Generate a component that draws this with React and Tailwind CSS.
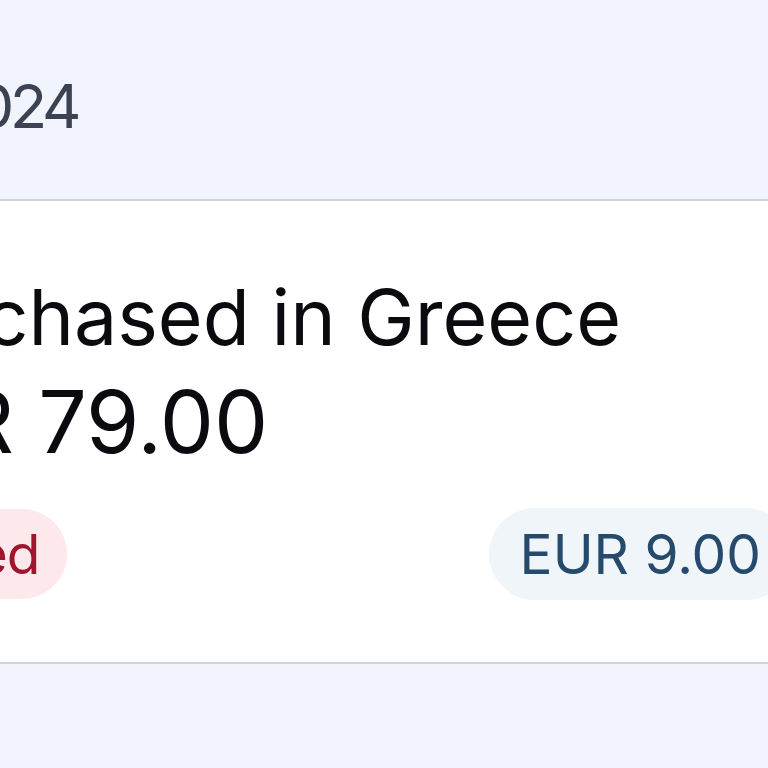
import React from 'react';

const App = () => {
  return (
    <div className="w-[768px] h-[768px] overflow-hidden bg-[#f1f4fc] font-['Inter','Noto_Sans',sans-serif]">
      <div className="h-[199px] pt-[76px] overflow-hidden">
        <p className="ml-[-236px] whitespace-nowrap text-[61px] tracking-[-0.07em] leading-none text-[#3b4252]">12 Mar 2024</p>
      </div>
      <div className="h-[465px] bg-white border-y-2 border-[#d0d3df] pt-[78px] overflow-hidden">
        <h3 className="ml-[-138px] whitespace-nowrap text-[77px] leading-none text-[#0b0b0f]">Purchased in Greece</h3>
        <p className="ml-[-157px] mt-[23px] whitespace-nowrap text-[86px] leading-none text-[#0b0b0f]">EUR 79.00</p>
        <div className="mt-[43px] flex items-center justify-between w-[792px]">
          <span className="ml-[-211px] h-[90px] pl-[31px] pr-[28px] flex items-center rounded-full bg-[#fde8eb] text-[55px] tracking-[-0.02em] text-[#a0142e] whitespace-nowrap">Declined</span>
          <span className="h-[92px] px-[31px] flex items-center rounded-full bg-[#f0f5f9] text-[55px] text-[#264a6c] whitespace-nowrap">EUR 9.00</span>
        </div>
      </div>
    </div>
  );
};

export default App;
